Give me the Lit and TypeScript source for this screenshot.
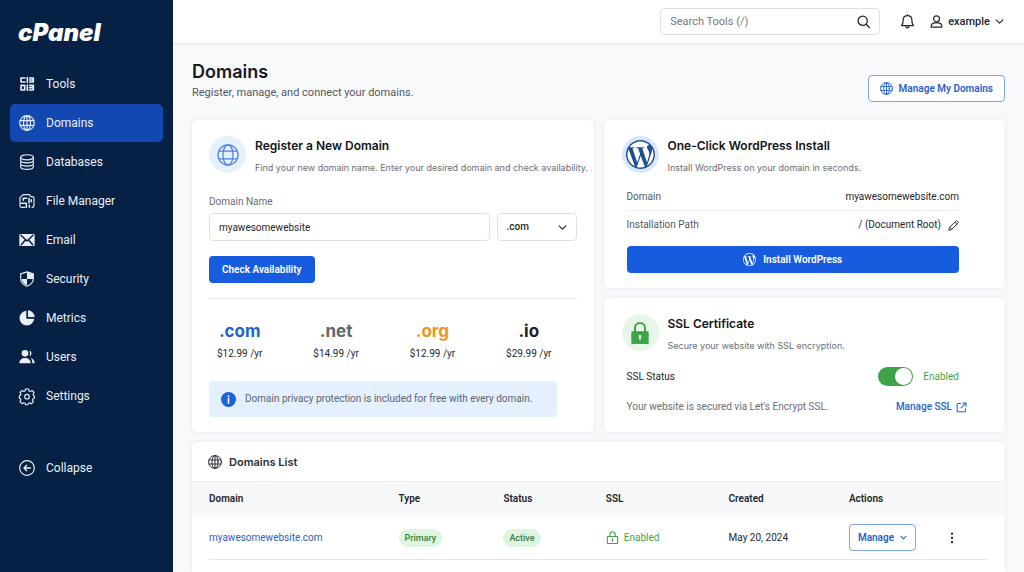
import { LitElement, html, css, svg, nothing } from "lit";
import type { TemplateResult } from "lit";
import { customElement, property, state } from "lit/decorators.js";
import { classMap } from "lit/directives/class-map.js";

const WORDPRESS =
  "M21.469 6.825c.84 1.537 1.318 3.3 1.318 5.175 0 3.979-2.156 7.456-5.363 9.325l3.295-9.527c.615-1.54.82-2.771.82-3.864 0-.405-.026-.78-.07-1.11m-7.981.105c.647-.03 1.232-.105 1.232-.105.582-.075.514-.93-.067-.899 0 0-1.755.135-2.88.135-1.064 0-2.85-.15-2.85-.15-.585-.03-.661.855-.075.885 0 0 .54.061 1.125.09l1.68 4.605-2.37 7.08L5.354 6.9c.649-.03 1.234-.1 1.234-.1.585-.075.516-.93-.065-.896 0 0-1.746.138-2.874.138-.2 0-.438-.008-.69-.015C4.911 3.15 8.235 1.215 12 1.215c2.809 0 5.365 1.072 7.286 2.833-.046-.003-.091-.009-.141-.009-1.06 0-1.812.923-1.812 1.914 0 .89.513 1.643 1.06 2.531.411.72.89 1.643.89 2.977 0 .915-.354 1.994-.821 3.479l-1.075 3.585-3.9-11.61.001.014zM12 22.784c-1.059 0-2.081-.153-3.048-.437l3.237-9.406 3.315 9.087c.024.053.05.101.078.149-1.12.393-2.325.609-3.582.609M1.211 12c0-1.564.336-3.05.935-4.39L7.29 21.709C3.694 19.96 1.212 16.271 1.211 12M12 0C5.385 0 0 5.385 0 12s5.385 12 12 12 12-5.385 12-12S18.615 0 12 0";

const glyphs: Record<string, TemplateResult> = {
  tools: svg`<path d="M9 3H3v6h6M12.500 2.500v7M16 3h5.500v6H16M16 6h4M3 14h5.500v7H3zM12.500 13.500v8M16 14h5.500v7H16M16 17.500h5" stroke-width="2.400"/>`,
  globe: svg`<circle cx="12" cy="12" r="11"/><ellipse cx="12" cy="12" rx="5.200" ry="11"/><path d="M1.800 8.500h20.400M1.800 15.500h20.400M12 1v22"/>`,
  globeSlim: svg`<circle cx="12" cy="12" r="11"/><ellipse cx="12" cy="12" rx="5.500" ry="11"/><path d="M2.200 7.800h19.600M2.200 16.200h19.600"/>`,
  database: svg`<ellipse cx="12" cy="5" rx="9.500" ry="3.800"/><path d="M2.500 5v4.500c0 2.100 4.200 3.800 9.500 3.800s9.500-1.700 9.500-3.800V5M3 10.500c-1 2.500-.5 3.500-.5 3.800 0 2.100 4.200 3.800 9.500 3.800s9.500-1.700 9.500-3.800c0-.300.5-1.300-.5-3.800M3 15.500c-1 2.500-.5 3.300-.5 3.600 0 2.100 4.200 3.900 9.500 3.900s9.500-1.800 9.500-3.900c0-.300.5-1.100-.5-3.600"/>`,
  files: svg`<path d="M9 21.500H4A2.500 2.500 0 0 1 1.500 19V7L6 2.500h9.500L18 5.500h2A2.500 2.500 0 0 1 22.500 8v10.500a3 3 0 0 1-3 3"/><path d="M6.500 8h5M6.500 8v3M3 15.500h8v6M15 8v7M18.500 10v3M15.500 18.500v3" stroke-width="2.300"/>`,
  mail: svg`<rect x=".5" y="3" width="23" height="18" rx="1.500" fill="currentColor" stroke="none"/><path d="M3 5l9 8.500L21 5M3.500 19L9.500 12M20.500 19l-6-7" stroke="#072144" stroke-width="2.200"/>`,
  shield: svg`<path d="M12 2l9 3v7h-9zM4 12h8v9.500C7.500 19.500 4.500 16 4 12z" fill="currentColor" stroke="none"/><path d="M12 1.300l9.500 3v7c0 5.500-4 9.500-9.500 11.500C6.500 20.800 2.500 16.800 2.500 11.300v-7z"/>`,
  pie: svg`<path d="M11 1.300V13h11.800A11 11 0 1 1 11 1.300z" fill="currentColor" stroke="none"/><path d="M13.500.5A10.500 10.500 0 0 1 23.500 10.600h-10z" fill="currentColor" stroke="none"/>`,
  users: svg`<circle cx="9" cy="6.500" r="5" fill="currentColor" stroke="none"/><path d="M.5 21.500c0-5 3.500-8 8.500-8s8.500 3 8.500 8z" fill="currentColor" stroke="none"/><path d="M15.500 2.200a4.600 4.600 0 0 1 0 8.800c1.400-2.600 1.400-6 0-8.800zM17.500 13.500c3.500.8 6 3.500 6 8H20c0-3.500-.8-6-2.500-8z" fill="currentColor" stroke="none"/>`,
  gear: svg`<path d="M9.700 1.500h4.600l.7 2.900 2 .9 2.600-1.600 3 3.100-1.500 2.500.8 2 .6.700v0h.7l-.2 3.500-2 .7-.9 2 1.400 2.500-3.100 3-2.500-1.500-2 .9-.7 2h-3.400l-.8-2.300-2-.8-2.600 1.500-3-3.100 1.500-2.500-.8-2-1.500-.4v-3.900l1.600-.5.8-2-1.500-2.500 3.100-3L7 5.200l2-.9z"/><circle cx="12" cy="13" r="3.500"/>`,
  collapse: svg`<circle cx="12" cy="12" r="11"/><path d="M17 12H8M11.500 8L7.500 12l4 4" stroke-width="2"/>`,
  search: svg`<circle cx="10.500" cy="10.500" r="8.500"/><path d="M17 17l6 6"/>`,
  bell: svg`<path d="M2.500 18.500h19c-2-2.200-2.500-3.500-2.500-8.500 0-4.500-2.600-7.500-7-7.500S5 5.500 5 10c0 5-.5 6.300-2.500 8.500zM9.500 19c0 1.800 1 3 2.500 3s2.500-1.200 2.500-3M12 2.500V1"/>`,
  user: svg`<circle cx="12" cy="7" r="5.500"/><path d="M2 22.500c0-5 3-8 7-8h6c4 0 7 3 7 8z"/>`,
  chevron: svg`<path d="M3 7.500l9 9 9-9"/>`,
  wordpress: svg`<path d=${WORDPRESS} fill="currentColor" stroke="none"/>`,
  pencil: svg`<path d="M2 22l1.500-6L17 2.500c1-1 2.500-1 3.500 0l1 1c1 1 1 2.500 0 3.500L8 20.500zM15 5l4.500 4.500M4 16l4 4"/>`,
  lock: svg`<path d="M6.500 11V6.500a5.500 5.500 0 0 1 11 0V11" stroke-width="2.200"/><rect x="2.500" y="10" width="19" height="14" rx="1" fill="currentColor" stroke="none"/><path d="M12 14a1.600 1.600 0 0 1 .9 2.900v2.600h-1.800v-2.600A1.600 1.600 0 0 1 12 14z" fill="#e6f6e8" stroke="none"/>`,
  lockLine: svg`<path d="M7 10V6.500a5 5 0 0 1 10 0V10"/><rect x="2.500" y="10" width="19" height="13" rx="1"/><path d="M12 14.500v4" stroke-width="2.600"/>`,
  external: svg`<path d="M10 3.500H4A1.500 1.500 0 0 0 2.500 5v15A1.500 1.500 0 0 0 4 21.500h15a1.500 1.500 0 0 0 1.500-1.500v-6M14.500 2H22v7.500M22 2L11 13"/>`,
  info: svg`<circle cx="12" cy="12" r="12" fill="currentColor" stroke="none"/><path d="M12 10.500V18" stroke="#fff" stroke-width="2.600"/><circle cx="12" cy="6.600" r="1.600" fill="#fff" stroke="none"/>`,
  dots: svg`<g fill="currentColor" stroke="none"><circle cx="12" cy="3.500" r="2.300"/><circle cx="12" cy="12" r="2.300"/><circle cx="12" cy="20.500" r="2.300"/></g>`,
};

@customElement("ui-icon")
export class UiIcon extends LitElement {
  @property() name = "";
  @property({ type: Number }) size = 16;
  @property({ type: Number }) weight = 2;

  static styles = css`
    :host {
      display: inline-flex;
      flex: none;
    }
    .glyph {
      display: block;
      overflow: visible;
    }
  `;

  render() {
    return html`<svg
      class="glyph"
      width=${this.size}
      height=${this.size}
      viewBox="0 0 24 24"
      fill="none"
      stroke="currentColor"
      stroke-width=${this.weight}
      stroke-linecap="round"
      stroke-linejoin="round"
      aria-hidden="true"
    >
      ${glyphs[this.name] ?? nothing}
    </svg>`;
  }
}

interface NavItem {
  label: string;
  icon: string;
}

const NAV: NavItem[] = [
  { label: "Tools", icon: "tools" },
  { label: "Domains", icon: "globe" },
  { label: "Databases", icon: "database" },
  { label: "File Manager", icon: "files" },
  { label: "Email", icon: "mail" },
  { label: "Security", icon: "shield" },
  { label: "Metrics", icon: "pie" },
  { label: "Users", icon: "users" },
  { label: "Settings", icon: "gear" },
];

const PRICES = [
  { tld: ".com", price: "$12.99 /yr", tone: "blue" },
  { tld: ".net", price: "$14.99 /yr", tone: "gray" },
  { tld: ".org", price: "$12.99 /yr", tone: "orange" },
  { tld: ".io", price: "$29.99 /yr", tone: "dark" },
];

const DOMAINS = [
  { name: "myawesomewebsite.com", type: "Primary", status: "Active", ssl: "Enabled", created: "May 20, 2024" },
];

@customElement("app-root")
export class AppRoot extends LitElement {
  @state() private active = "Domains";
  @state() private ssl = true;

  static styles = css`
    :host {
      display: grid;
      grid-template-columns: 173px minmax(0, 1fr);
      min-height: 100vh;
      background: #f8f9fb;
      color: #24272c;
      font-family: Roboto, "Liberation Sans", sans-serif;
      font-size: 10px;
      line-height: 16px;
    }
    * {
      box-sizing: border-box;
    }
    h1,
    h2,
    p,
    dl,
    dd,
    ul {
      margin: 0;
      padding: 0;
    }
    button,
    input,
    select {
      font: inherit;
      color: inherit;
      margin: 0;
    }
    button {
      cursor: pointer;
    }
    a {
      color: #2563c9;
      text-decoration: none;
    }
    .logo,
    .title,
    .card-title,
    .card-sub,
    .list-title,
    .tld {
      font-family: Inter, "Liberation Sans", sans-serif;
    }

    .sidebar {
      background: #072144;
      color: #e9eef6;
      padding: 17px 10px;
    }
    .logo {
      display: block;
      padding-left: 8px;
      margin-bottom: 16px;
      color: #fff;
      font-size: 24px;
      font-weight: 900;
      font-style: italic;
      line-height: 32px;
    }
    .nav {
      display: flex;
      flex-direction: column;
      gap: 1px;
      list-style: none;
    }
    .nav-link {
      display: flex;
      align-items: center;
      gap: 11px;
      width: 100%;
      height: 38px;
      padding: 0 9px;
      border: 0;
      border-radius: 5px;
      background: none;
      color: inherit;
      font-size: 12px;
    }
    .nav-link.active {
      background: #1248b0;
    }
    .collapse {
      margin-top: 34px;
    }

    .main {
      display: flex;
      flex-direction: column;
    }
    .topbar {
      display: flex;
      align-items: center;
      justify-content: flex-end;
      height: 44px;
      padding: 0 20px;
      background: #fff;
      border-bottom: 1px solid #e9eaed;
      box-shadow: 0 1px 2px rgb(20 30 60 / 4%);
    }
    .search {
      display: flex;
      align-items: center;
      width: 220px;
      height: 27px;
      padding: 0 9px;
      border: 1px solid #dfe1e6;
      border-radius: 4px;
    }
    .search-input {
      flex: 1;
      min-width: 0;
      padding: 0;
      border: 0;
      outline: 0;
      background: none;
      font-size: 11px;
    }
    .search-input::placeholder {
      color: #74777e;
      opacity: 1;
    }
    .icon-button {
      display: flex;
      padding: 0;
      border: 0;
      background: none;
    }
    .bell {
      margin: 0 15px 0 20px;
    }
    .account {
      display: flex;
      align-items: center;
      gap: 5px;
      padding: 0;
      border: 0;
      background: none;
      font-size: 11px;
      font-weight: 500;
    }

    .content {
      flex: 1;
      display: flex;
      flex-direction: column;
      gap: 10px;
      padding: 16px 19px 0;
    }
    .page-head {
      display: flex;
      justify-content: space-between;
      align-items: flex-end;
      padding-bottom: 8px;
    }
    .title {
      color: #17191d;
      font-size: 18px;
      font-weight: 600;
      line-height: 24px;
    }
    .lead {
      color: #55585f;
      font-size: 11px;
      line-height: 18px;
    }
    .outline {
      display: flex;
      align-items: center;
      justify-content: center;
      height: 27px;
      border: 1px solid #7ea6e4;
      border-radius: 4px;
      background: #fff;
      color: #2563c9;
      font-weight: 600;
    }
    .manage-all {
      gap: 6px;
      padding: 0 11px;
    }

    .cards {
      display: grid;
      grid-template-columns: repeat(2, minmax(0, 1fr));
      gap: 10px;
    }
    .stack {
      display: flex;
      flex-direction: column;
      gap: 10px;
    }
    .card {
      background: #fff;
      border-radius: 5px;
      box-shadow: 0 0 4px rgb(30 40 80 / 9%);
    }
    .register {
      padding: 16px 17px 15px;
    }
    .side-card {
      padding: 16px 18px 15px;
    }
    .side-card:last-child {
      flex: 1;
    }
    .card-head {
      display: flex;
      gap: 9px;
      white-space: nowrap;
    }
    .badge {
      display: flex;
      flex: none;
      align-items: center;
      justify-content: center;
      width: 37px;
      height: 37px;
      border-radius: 50%;
      background: #e5f1fd;
      color: #4a7fe0;
    }
    .badge.wp {
      background: #d6e8fb;
      color: #1d4f91;
    }
    .badge.wp ui-icon {
      border-radius: 50%;
      background: #fff;
    }
    .badge.lock {
      background: #e6f6e8;
      color: #3fa34a;
    }
    .card-title {
      margin: 2px 0 6px;
      color: #121418;
      font-size: 12px;
      font-weight: 600;
      line-height: 16px;
    }
    .card-sub {
      font-size: 9px;
    }
    .muted {
      color: #6a6d75;
    }

    .field {
      display: grid;
      grid-template-columns: 1fr 80px;
      gap: 3px 7px;
      margin: 18px 0 15px;
    }
    .field-label {
      grid-column: 1 / -1;
      color: #6a6d75;
    }
    .text-input,
    .select {
      width: 100%;
      height: 28px;
      padding: 0 9px;
      border: 1px solid #dfe1e6;
      border-radius: 4px;
      background: #fff;
    }
    .select-wrap {
      display: grid;
      align-items: center;
    }
    .select-wrap > * {
      grid-area: 1 / 1;
    }
    .select {
      appearance: none;
      font-weight: 500;
    }
    .select-arrow {
      justify-self: end;
      margin-right: 10px;
      pointer-events: none;
    }
    .primary {
      display: flex;
      align-items: center;
      justify-content: center;
      gap: 7px;
      height: 27px;
      padding: 0 13px;
      border: 0;
      border-radius: 4px;
      background: #175cdf;
      color: #fff;
      font-weight: 600;
    }
    .prices {
      display: flex;
      justify-content: space-between;
      margin-top: 15px;
      padding: 21px 25px 19px 8px;
      border-top: 1px solid #e4e6ea;
      list-style: none;
      text-align: center;
    }
    .price {
      display: flex;
      flex-direction: column;
      gap: 4px;
    }
    .tld {
      font-size: 17px;
      font-weight: 700;
      line-height: 22px;
    }
    .tld.blue {
      color: #1f62cc;
    }
    .tld.gray {
      color: #62656c;
    }
    .tld.orange {
      color: #f0941f;
    }
    .tld.dark {
      color: #202226;
    }
    .notice {
      display: flex;
      align-items: center;
      gap: 9px;
      height: 36px;
      margin-right: 20px;
      padding: 0 12px;
      border-radius: 4px;
      background: #e4f0fd;
      color: #5c6470;
    }
    .notice ui-icon {
      color: #1b62de;
    }

    .side-body {
      padding: 0 28px 0 5px;
    }
    .pairs {
      margin-top: 7px;
    }
    .pair {
      display: flex;
      align-items: center;
      justify-content: space-between;
      height: 28px;
      border-bottom: 1px solid #eceef1;
    }
    .pair:last-child {
      border-bottom: 0;
    }
    .pair dt {
      color: #55585f;
    }
    .pair dd {
      display: flex;
      align-items: center;
      gap: 7px;
    }
    .install {
      width: 100%;
      margin-top: 7px;
    }

    .line {
      display: flex;
      align-items: center;
      justify-content: space-between;
    }
    .status {
      height: 19px;
      margin: 13px 0;
    }
    .status-value {
      display: flex;
      align-items: center;
      gap: 10px;
      color: #3fa34a;
    }
    .toggle {
      appearance: none;
      display: flex;
      width: 35px;
      height: 19px;
      padding: 1px;
      border-radius: 10px;
      background: #b6bac2;
      cursor: pointer;
    }
    .toggle::before {
      content: "";
      width: 17px;
      height: 17px;
      border-radius: 50%;
      background: #fff;
    }
    .toggle:checked {
      justify-content: flex-end;
      background: #3fa34a;
    }
    .manage-ssl {
      display: flex;
      align-items: center;
      gap: 4px;
      margin-right: -8px;
      font-weight: 500;
      white-space: nowrap;
    }

    .list {
      flex: 1;
      border-radius: 5px 5px 0 0;
    }
    .list-title {
      display: flex;
      align-items: center;
      gap: 7px;
      height: 39px;
      padding: 0 16px;
      color: #2a2d33;
      font-size: 11px;
      font-weight: 600;
    }
    .table {
      width: 100%;
      table-layout: fixed;
      border-collapse: collapse;
      text-align: left;
    }
    .table th,
    .table td {
      padding: 0;
    }
    .table th:first-child,
    .table td:first-child {
      padding-left: 17px;
    }
    .table th {
      height: 34px;
      border-top: 1px solid #eceef1;
      background: #f7f8fa;
      font-weight: 600;
    }
    .row {
      height: 44px;
      background: linear-gradient(#e4e6ea, #e4e6ea) bottom / calc(100% - 34px) 1px no-repeat;
    }
    .c-domain {
      width: 25.4%;
    }
    .c-type {
      width: 12.9%;
    }
    .c-status {
      width: 12.6%;
    }
    .c-ssl {
      width: 15.1%;
    }
    .c-created {
      width: 14.8%;
    }
    .c-actions {
      width: 12%;
    }
    .pill {
      display: inline-block;
      padding: 1px 6px;
      border-radius: 9px;
      background: #dff3e1;
      color: #35803c;
      font-size: 9px;
      font-weight: 500;
    }
    .secure {
      display: flex;
      align-items: center;
      gap: 5px;
      color: #3fa34a;
    }
    .manage {
      gap: 6px;
      padding: 0 8px;
    }
  `;

  private navItem(item: NavItem) {
    return html`<li>
      <button
        class=${classMap({ "nav-link": true, active: item.label === this.active })}
        @click=${() => (this.active = item.label)}
      >
        <ui-icon name=${item.icon} size="16" weight="1.700"></ui-icon>${item.label}
      </button>
    </li>`;
  }

  private registerCard() {
    return html`<section class="card register">
      <div class="card-head">
        <span class="badge"><ui-icon name="globeSlim" size="22" weight="1.300"></ui-icon></span>
        <div>
          <h2 class="card-title">Register a New Domain</h2>
          <p class="card-sub muted">Find your new domain name. Enter your desired domain and check availability.</p>
        </div>
      </div>
      <div class="field">
        <label class="field-label" for="domain">Domain Name</label>
        <input class="text-input" id="domain" type="text" value="myawesomewebsite" />
        <div class="select-wrap">
          <select class="select" aria-label="Extension">
            ${PRICES.map((p) => html`<option>${p.tld}</option>`)}
          </select>
          <ui-icon class="select-arrow" name="chevron" size="9" weight="3"></ui-icon>
        </div>
      </div>
      <button class="primary">Check Availability</button>
      <ul class="prices">
        ${PRICES.map(
          (p) => html`<li class="price"><span class="tld ${p.tone}">${p.tld}</span><span>${p.price}</span></li>`
        )}
      </ul>
      <p class="notice">
        <ui-icon name="info" size="15"></ui-icon>Domain privacy protection is included for free with every domain.
      </p>
    </section>`;
  }

  private wordpressCard() {
    return html`<section class="card side-card">
      <div class="card-head">
        <span class="badge wp"><ui-icon name="wordpress" size="29"></ui-icon></span>
        <div>
          <h2 class="card-title">One-Click WordPress Install</h2>
          <p class="card-sub muted">Install WordPress on your domain in seconds.</p>
        </div>
      </div>
      <div class="side-body">
        <dl class="pairs">
          <div class="pair"><dt>Domain</dt><dd>myawesomewebsite.com</dd></div>
          <div class="pair">
            <dt>Installation Path</dt>
            <dd>
              / (Document Root)
              <button class="icon-button" aria-label="Edit path">
                <ui-icon name="pencil" size="11"></ui-icon>
              </button>
            </dd>
          </div>
        </dl>
        <button class="primary install"><ui-icon name="wordpress" size="13"></ui-icon>Install WordPress</button>
      </div>
    </section>`;
  }

  private sslCard() {
    return html`<section class="card side-card">
      <div class="card-head">
        <span class="badge lock"><ui-icon name="lock" size="22"></ui-icon></span>
        <div>
          <h2 class="card-title">SSL Certificate</h2>
          <p class="card-sub muted">Secure your website with SSL encryption.</p>
        </div>
      </div>
      <div class="side-body">
        <div class="line status">
          <label for="ssl">SSL Status</label>
          <span class="status-value">
            <input
              class="toggle"
              id="ssl"
              type="checkbox"
              .checked=${this.ssl}
              @change=${() => (this.ssl = !this.ssl)}
            />
            ${this.ssl ? "Enabled" : "Disabled"}
          </span>
        </div>
        <div class="line">
          <span class="muted">Your website is secured via Let's Encrypt SSL.</span>
          <a class="manage-ssl" href="#ssl">Manage SSL <ui-icon name="external" size="11" weight="2.200"></ui-icon></a>
        </div>
      </div>
    </section>`;
  }

  private domainsList() {
    return html`<section class="card list">
      <h2 class="list-title"><ui-icon name="globe" size="14" weight="1.700"></ui-icon>Domains List</h2>
      <table class="table">
        <thead>
          <tr>
            <th class="c-domain">Domain</th>
            <th class="c-type">Type</th>
            <th class="c-status">Status</th>
            <th class="c-ssl">SSL</th>
            <th class="c-created">Created</th>
            <th class="c-actions">Actions</th>
            <th></th>
          </tr>
        </thead>
        <tbody>
          ${DOMAINS.map(
            (d) => html`<tr class="row">
              <td><a href="#domain">${d.name}</a></td>
              <td><span class="pill">${d.type}</span></td>
              <td><span class="pill">${d.status}</span></td>
              <td>
                <span class="secure"><ui-icon name="lockLine" size="13"></ui-icon>${d.ssl}</span>
              </td>
              <td>${d.created}</td>
              <td>
                <button class="outline manage">Manage <ui-icon name="chevron" size="7" weight="3.500"></ui-icon></button>
              </td>
              <td>
                <button class="icon-button" aria-label="More actions"><ui-icon name="dots" size="12"></ui-icon></button>
              </td>
            </tr>`
          )}
        </tbody>
      </table>
    </section>`;
  }

  render() {
    return html`
      <aside class="sidebar">
        <span class="logo">cPanel</span>
        <nav>
          <ul class="nav">
            ${NAV.map((item) => this.navItem(item))}
          </ul>
          <button class="nav-link collapse">
            <ui-icon name="collapse" size="16" weight="1.700"></ui-icon>Collapse
          </button>
        </nav>
      </aside>
      <div class="main">
        <header class="topbar">
          <label class="search">
            <input class="search-input" type="search" placeholder="Search Tools (/)" aria-label="Search Tools" />
            <ui-icon name="search" size="13" weight="2.400"></ui-icon>
          </label>
          <button class="icon-button bell" aria-label="Notifications">
            <ui-icon name="bell" size="15"></ui-icon>
          </button>
          <button class="account">
            <ui-icon name="user" size="13" weight="2.200"></ui-icon>example
            <ui-icon name="chevron" size="9" weight="2.800"></ui-icon>
          </button>
        </header>
        <main class="content">
          <div class="page-head">
            <div>
              <h1 class="title">Domains</h1>
              <p class="lead">Register, manage, and connect your domains.</p>
            </div>
            <button class="outline manage-all">
              <ui-icon name="globe" size="13" weight="1.700"></ui-icon>Manage My Domains
            </button>
          </div>
          <div class="cards">
            ${this.registerCard()}
            <div class="stack">${this.wordpressCard()} ${this.sslCard()}</div>
          </div>
          ${this.domainsList()}
        </main>
      </div>
    `;
  }
}
